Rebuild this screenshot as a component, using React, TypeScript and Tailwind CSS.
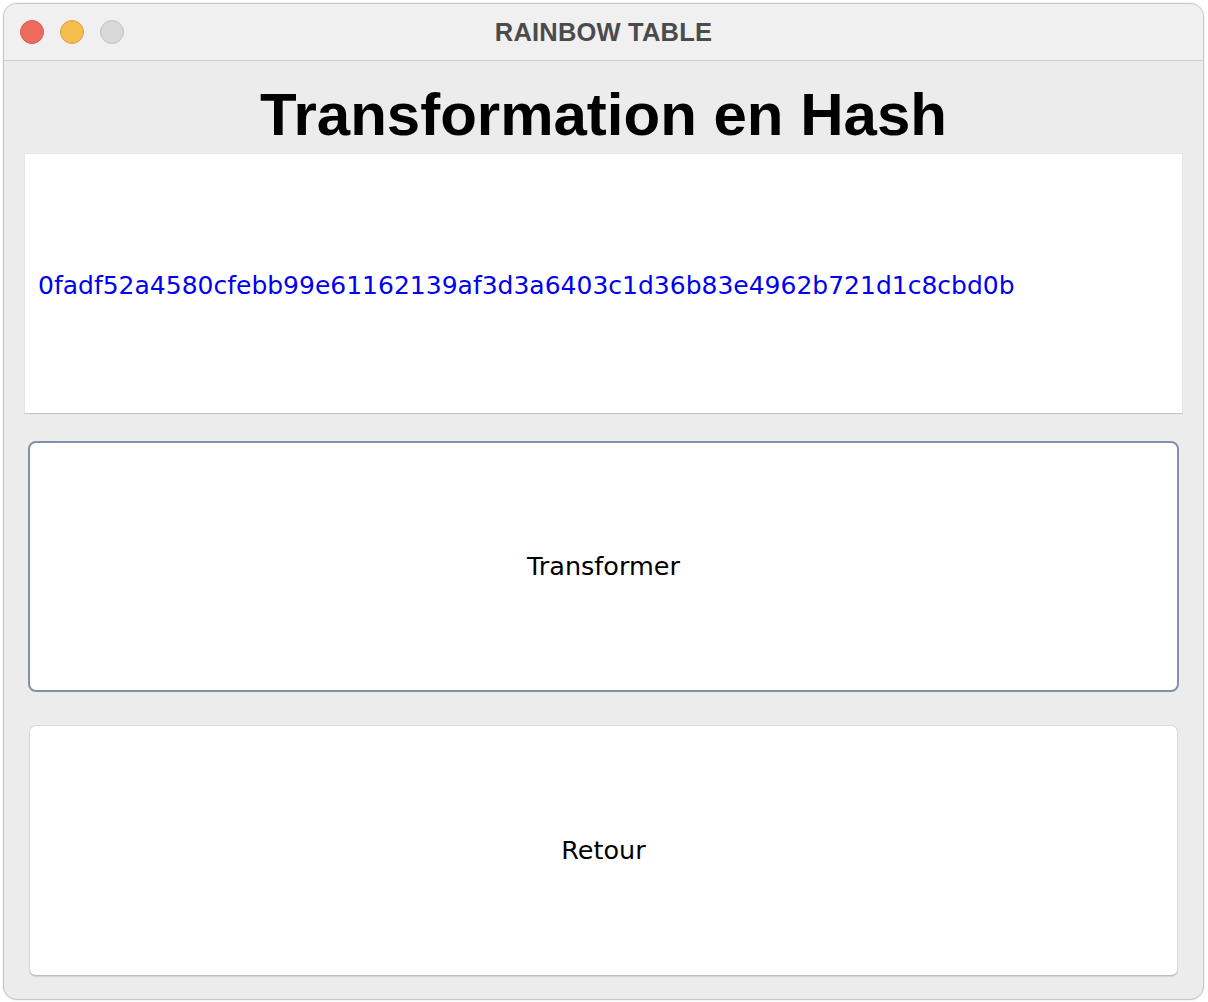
import React from 'react';

const HASH = '0fadf52a4580cfebb99e61162139af3d3a6403c1d36b83e4962b721d1c8cbd0b';

function TrafficLights() {
  return (
    <div className="flex items-center gap-4 pl-4">
      <span className="block h-6 w-6 rounded-full border border-[#d9584d] bg-[#ee6a5f]" />
      <span className="block h-6 w-6 rounded-full border border-[#dca43a] bg-[#f6be4f]" />
      <span className="block h-6 w-6 rounded-full border border-[#c2c2c2] bg-[#d9d9d9]" />
    </div>
  );
}

export default function App() {
  return (
    <div className="min-h-[1002px] w-[1208px] bg-white pl-[3px] pt-[3px]">
      <div className="flex h-[997px] w-[1201px] flex-col overflow-hidden rounded-[14px] border border-[#c6c6c6] bg-[#ececec] shadow-[0_0_2px_rgba(0,0,0,0.15)]">
        {/* title bar */}
        <div className="relative flex h-[57px] shrink-0 items-center border-b border-[#cdcdcd] bg-[#f0f0f0]">
          <TrafficLights />
          <div className="absolute inset-0 flex items-center justify-center font-['Liberation_Sans',Arial,sans-serif] text-[25.5px] font-bold tracking-[0.2px] text-[#4b4b4b]">
            RAINBOW TABLE
          </div>
        </div>

        {/* content */}
        <div className="flex flex-1 flex-col px-[20px]">
          <div className="flex h-[92px] items-center justify-center pt-[16px] font-['Liberation_Sans',Arial,sans-serif] text-[60px] font-bold leading-none text-black">
            Transformation en Hash
          </div>

          <div className="flex h-[261px] items-center border border-[#e6e6e6] border-b-[#c4c4c4] bg-white pl-[13px] pt-[4px] font-['DejaVu_Sans',sans-serif] text-[25px] text-[#0000f0]">
            {HASH}
          </div>

          <div className="mt-[27px] px-[4px]">
            <button className="flex h-[251px] w-full items-center justify-center rounded-[8px] border-2 border-[#8192a8] bg-white font-['DejaVu_Sans',sans-serif] text-[25.5px] text-black">
              Transformer
            </button>
          </div>

          <div className="mt-[33px] px-[5px]">
            <button className="flex h-[251px] w-full items-center justify-center rounded-[7px] border border-[#dadada] border-b-[#bdbdbd] bg-white font-['DejaVu_Sans',sans-serif] text-[25.5px] text-black shadow-[0_1px_1px_rgba(0,0,0,0.12)]">
              Retour
            </button>
          </div>
        </div>
      </div>
    </div>
  );
}
